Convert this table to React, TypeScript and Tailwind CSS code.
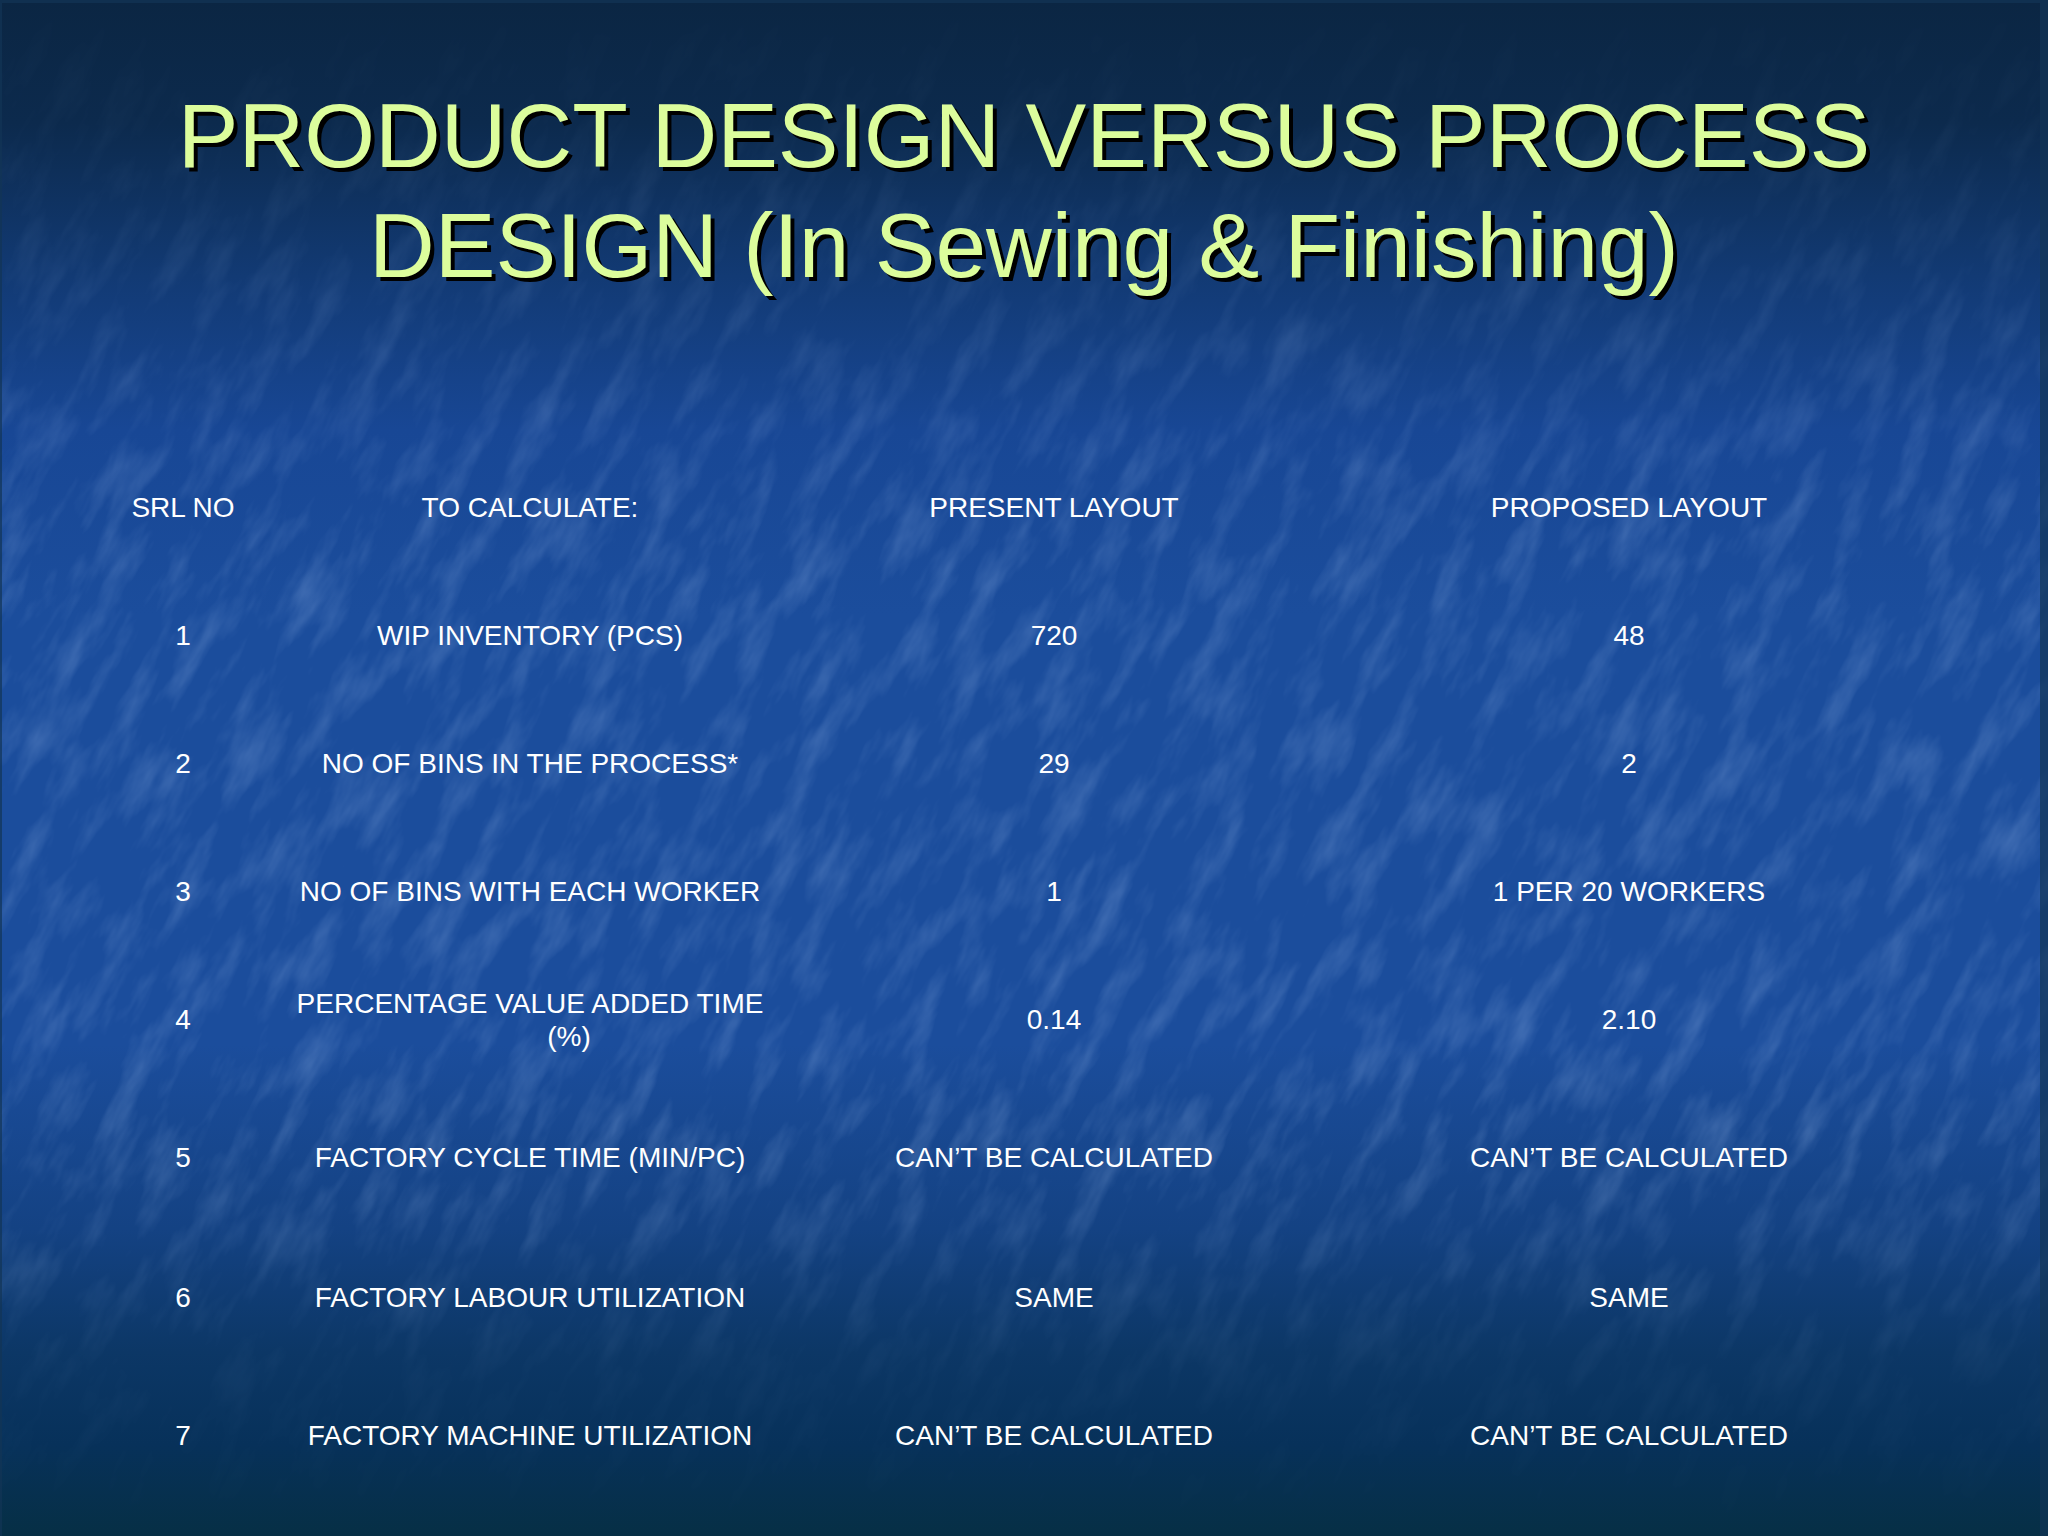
import React from "react";

type Row = {
  no: string;
  label: React.ReactNode;
  present: string;
  proposed: string;
  h: string;
};

const ROWS: Row[] = [
  { no: "1", label: "WIP INVENTORY (PCS)", present: "720", proposed: "48", h: "h-[128px]" },
  { no: "2", label: "NO OF BINS IN THE PROCESS*", present: "29", proposed: "2", h: "h-[128px]" },
  { no: "3", label: "NO OF BINS WITH EACH WORKER", present: "1", proposed: "1 PER 20 WORKERS", h: "h-[128px]" },
  {
    no: "4",
    label: (
      <span className="flex flex-col items-center leading-[33px]">
        <span>PERCENTAGE VALUE ADDED TIME</span>
        <span className="pl-[78px]">(%)</span>
      </span>
    ),
    present: "0.14",
    proposed: "2.10",
    h: "h-[128px]",
  },
  { no: "5", label: "FACTORY CYCLE TIME (MIN/PC)", present: "CAN’T BE CALCULATED", proposed: "CAN’T BE CALCULATED", h: "h-[148px]" },
  { no: "6", label: "FACTORY LABOUR UTILIZATION", present: "SAME", proposed: "SAME", h: "h-[132px]" },
  { no: "7", label: "FACTORY MACHINE UTILIZATION", present: "CAN’T BE CALCULATED", proposed: "CAN’T BE CALCULATED", h: "h-[144px]" },
];

// mottled texture laid over the slide background
function Texture() {
  return (
    <svg className="absolute inset-0 w-full h-full pointer-events-none" viewBox="0 0 2048 1536" preserveAspectRatio="none">
      <defs>
        <filter id="marble" x="0" y="0" width="100%" height="100%">
          <feTurbulence type="fractalNoise" baseFrequency="0.012 0.04" numOctaves="4" seed="7" />
          <feColorMatrix
            type="matrix"
            values="0 0 0 0 0.5  0 0 0 0 0.68  0 0 0 0 1  0 0 0 2 -0.9"
          />
        </filter>
        <linearGradient id="fade" x1="0" y1="0" x2="0" y2="1">
          <stop offset="0" stopColor="#fff" stopOpacity="0" />
          <stop offset="0.2" stopColor="#fff" stopOpacity="0.5" />
          <stop offset="0.35" stopColor="#fff" stopOpacity="1" />
          <stop offset="0.75" stopColor="#fff" stopOpacity="1" />
          <stop offset="0.9" stopColor="#fff" stopOpacity="0.2" />
          <stop offset="1" stopColor="#fff" stopOpacity="0" />
        </linearGradient>
        <mask id="fadeMask">
          <rect width="2048" height="1536" fill="url(#fade)" />
        </mask>
      </defs>
      <g mask="url(#fadeMask)" opacity="0.22">
        <g transform="translate(1024 768) rotate(-62) translate(-1800 -1800)">
          <rect width="3600" height="3600" filter="url(#marble)" />
        </g>
      </g>
    </svg>
  );
}

export default function App() {
  return (
    <div
      className="relative w-[2048px] h-[1536px] overflow-hidden bg-[linear-gradient(180deg,#0b2643_0%,#0c2a4d_8%,#123a74_18%,#184795_28%,#1b4d9c_40%,#1b4d9c_68%,#144283_80%,#0c3766_88%,#07315a_94%,#062f45_100%)] text-white"
      style={{ fontFamily: '"Liberation Sans", Arial, sans-serif' }}
    >
      <Texture />
      <div className="absolute inset-0 border-t-[3px] border-l-[2px] border-r-[8px] border-[#123456]/70 pointer-events-none" />

      <div className="relative flex flex-col">
        <h1 className="pt-[81px] text-center text-[91px] leading-[110px] font-normal text-[#dcfd9c] [text-shadow:4px_4px_0_#000]">
          PRODUCT DESIGN VERSUS PROCESS
          <br />
          DESIGN (In Sewing &amp; Finishing)
        </h1>

        <div className="mt-[143px] ml-[80px] flex flex-col text-[28px] leading-[34px]">
          <div className="grid grid-cols-[206px_488px_560px_590px] h-[128px] items-center text-center">
            <div>SRL NO</div>
            <div>TO CALCULATE:</div>
            <div>PRESENT LAYOUT</div>
            <div>PROPOSED LAYOUT</div>
          </div>
          {ROWS.map((r) => (
            <div key={r.no} className={`grid grid-cols-[206px_488px_560px_590px] items-center text-center ${r.h}`}>
              <div>{r.no}</div>
              <div className="flex justify-center">{r.label}</div>
              <div>{r.present}</div>
              <div>{r.proposed}</div>
            </div>
          ))}
        </div>
      </div>
    </div>
  );
}
